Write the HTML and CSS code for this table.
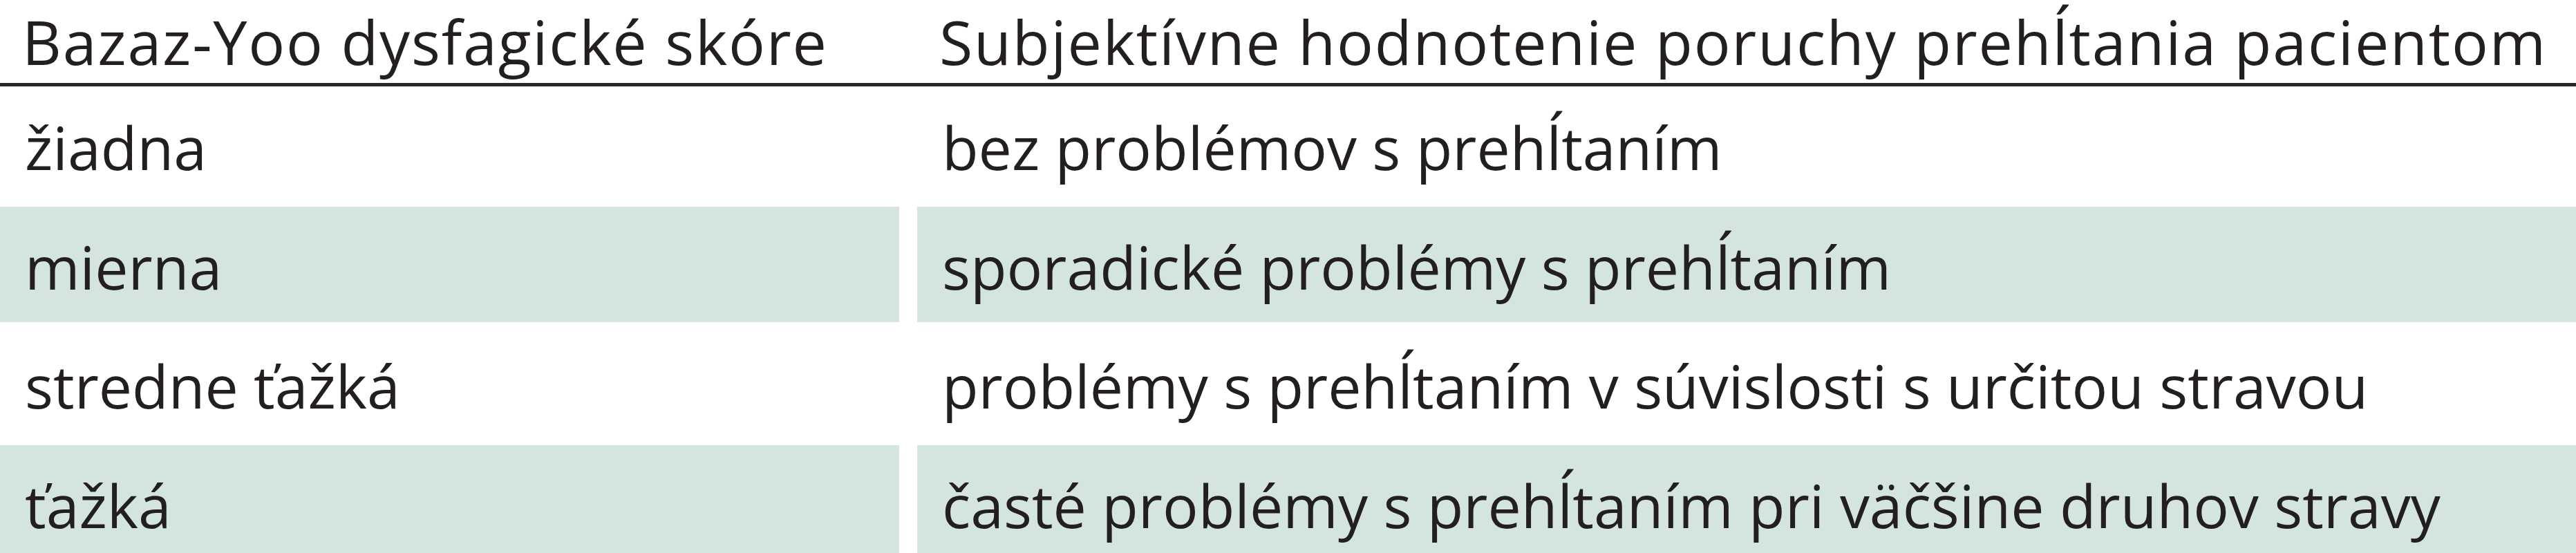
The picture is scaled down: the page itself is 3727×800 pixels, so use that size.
FILE: index.html
```html
<!DOCTYPE html>
<html lang="sk">
<head>
<meta charset="utf-8">
<title>Bazaz-Yoo dysfagické skóre</title>
<link rel="stylesheet" href="styles.css">
</head>
<body>
<div class="table">
  <div class="thead">
    <div class="th">Bazaz-Yoo dysfagické skóre</div>
    <div class="th">Subjektívne hodnotenie poruchy prehĺtania pacientom</div>
  </div>
  <div class="tbody">
    <div class="row">
      <div class="cell">žiadna</div>
      <div class="cell">bez problémov s prehĺtaním</div>
    </div>
    <div class="row shade">
      <div class="cell">mierna</div>
      <div class="cell">sporadické problémy s prehĺtaním</div>
    </div>
    <div class="row">
      <div class="cell">stredne ťažká</div>
      <div class="cell">problémy s prehĺtaním v súvislosti s určitou stravou</div>
    </div>
    <div class="row shade">
      <div class="cell">ťažká</div>
      <div class="cell">časté problémy s prehĺtaním pri väčšine druhov stravy</div>
    </div>
  </div>
</div>
</body>
</html>
```
FILE: styles.css
```css
html, body {
  margin: 0;
  padding: 0;
  background: #ffffff;
}

body {
  font-family: "Open Sans", "Noto Sans", sans-serif;
  color: #231f20;
  width: 3727px;
  height: 800px;
  overflow: hidden;
}

.table {
  width: 3727px;
}

.thead {
  display: grid;
  grid-template-columns: 1301px 2400px;
  column-gap: 26px;
  height: 120px;
  border-bottom: 5px solid #2a2728;
}

.th {
  font-size: 88px;
  line-height: 88px;
  letter-spacing: 1.8px;
  padding: 16px 0 0 32px;
  white-space: nowrap;
}

.tbody {
  display: flex;
  flex-direction: column;
  gap: 5.5px;
  padding-top: 1px;
}

.row {
  display: grid;
  grid-template-columns: 1301px 2400px;
  column-gap: 26px;
  height: 167px;
}

.cell {
  font-size: 86px;
  line-height: 86px;
  padding: 44px 0 0 36px;
  white-space: nowrap;
}

.row.shade .cell {
  background: #d4e5e0;
}
```
